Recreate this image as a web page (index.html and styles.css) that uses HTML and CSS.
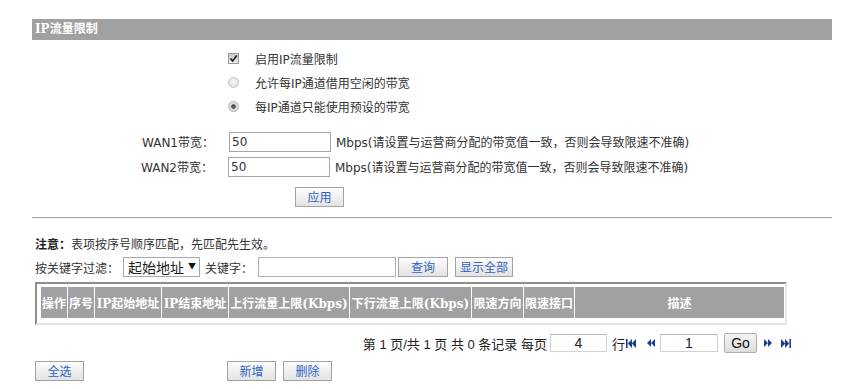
FILE: index.html
```html
<!DOCTYPE html>
<html lang="zh-CN">

<head>
    <meta charset="UTF-8">
    <title>IP流量限制</title>
    <link rel="stylesheet" href="styles.css">
</head>

<body>
    <div class="page">
        <div class="bar">IP流量限制</div>

        <!-- 限制方式 -->
        <div class="options">
            <div class="opt">
                <span class="cb"><svg width="9" height="9" viewBox="0 0 9 9"><path d="M1.5 4.5 L3.6 7 L7.8 1.6" fill="none" stroke="#1e1e1e" stroke-width="1.7"/></svg></span>启用IP流量限制
            </div>
            <div class="opt"><span class="rb"></span>允许每IP通道借用空闲的带宽</div>
            <div class="opt"><span class="rb on"></span>每IP通道只能使用预设的带宽</div>
        </div>

        <!-- 带宽 -->
        <div class="field first">
            <label class="name" for="wan1">WAN1带宽：</label>
            <input class="bw" id="wan1" type="text" value="50">
            <span class="hint">Mbps(请设置与运营商分配的带宽值一致，否则会导致限速不准确)</span>
        </div>
        <div class="field">
            <label class="name" for="wan2">WAN2带宽：</label>
            <input class="bw" id="wan2" type="text" value="50">
            <span class="hint">Mbps(请设置与运营商分配的带宽值一致，否则会导致限速不准确)</span>
        </div>

        <div class="apply"><button class="btn">应用</button></div>

        <div class="rule"></div>

        <div class="list">
            <p class="note"><b>注意：</b>表项按序号顺序匹配，先匹配先生效。</p>

            <div class="filter">
                按关键字过滤：
                <span class="sel">
                    <select>
                        <option>起始地址</option>
                        <option>结束地址</option>
                    </select>
                </span>
                <span class="kw-label">关键字：</span>
                <input class="kw" type="text">
                <button class="btn btn-query">查询</button>
                <button class="btn btn-all">显示全部</button>
            </div>

            <div class="grid-box">
                <table class="grid">
                    <colgroup>
                        <col style="width:26px">
                        <col style="width:26px">
                        <col style="width:66px">
                        <col style="width:66px">
                        <col style="width:120px">
                        <col style="width:121px">
                        <col style="width:51px">
                        <col style="width:50px">
                        <col style="width:209px">
                    </colgroup>
                    <tr>
                        <th>操作</th>
                        <th>序号</th>
                        <th>IP起始地址</th>
                        <th>IP结束地址</th>
                        <th>上行流量上限(Kbps)</th>
                        <th>下行流量上限(Kbps)</th>
                        <th>限速方向</th>
                        <th>限速接口</th>
                        <th>描述</th>
                    </tr>
                </table>
            </div>

            <!-- 分页 -->
            <div class="pager">
                <span class="info">第 1 页/共 1 页 共 0 条记录 每页</span>
                <input class="pg-input per" type="text" value="4">
                <span class="row-unit">行</span>
                <span class="ico first"><svg width="10" height="9" viewBox="0 0 10 9"><rect x="0" y="0" width="1.6" height="9" fill="#1b3e93"/><polygon points="6,0 1.8,4.5 6,9" fill="#1b3e93"/><polygon points="10,0 5.8,4.5 10,9" fill="#1b3e93"/></svg></span>
                <span class="ico prev"><svg width="8" height="8" viewBox="0 0 8 8"><polygon points="4,0 0,4 4,8" fill="#1b3e93"/><polygon points="8,0 4,4 8,8" fill="#1b3e93"/></svg></span>
                <input class="pg-input page-no" type="text" value="1">
                <button class="go">Go</button>
                <span class="ico next"><svg width="8" height="8" viewBox="0 0 8 8"><polygon points="0,0 4,4 0,8" fill="#1b3e93"/><polygon points="4,0 8,4 4,8" fill="#1b3e93"/></svg></span>
                <span class="ico last"><svg width="10" height="9" viewBox="0 0 10 9"><polygon points="0,0 4.2,4.5 0,9" fill="#1b3e93"/><polygon points="4,0 8.2,4.5 4,9" fill="#1b3e93"/><rect x="8.4" y="0" width="1.6" height="9" fill="#1b3e93"/></svg></span>
            </div>

            <div class="actions">
                <button class="btn">全选</button>
                <button class="btn btn-add">新增</button>
                <button class="btn btn-del">删除</button>
            </div>
        </div>
    </div>
</body>

</html>
```

FILE: styles.css
```css
body {
    margin: 0;
    font-family: "DejaVu Sans", "Noto Sans CJK SC", sans-serif;
    font-size: 12px;
    color: #333;
    background-color: #fff;
}

.page {
    width: 800px;
    margin-left: 32px;
    padding-top: 19px;
}

.bar {
    height: 21px;
    line-height: 21px;
    padding-left: 3px;
    background-color: #9fa1a3;
    color: #fff;
    font-family: "DejaVu Serif", "Noto Sans CJK SC", serif;
    font-weight: bold;
}

/* 复选框和单选框 */
.options {
    margin: 6px 0 0 196px;
}

.opt {
    height: 24px;
    display: flex;
    align-items: center;
}

.cb,
.rb {
    width: 11px;
    height: 11px;
    box-sizing: border-box;
    margin-right: 16px;
    flex-shrink: 0;
}

.cb {
    display: flex;
    align-items: center;
    justify-content: center;
    border: 1px solid #9c9c9c;
    background: linear-gradient(#c9c9c9, #e9e9e9);
}

.rb {
    border: 1px solid #c2c2c2;
    border-radius: 50%;
    background: radial-gradient(circle at 50% 40%, #f8f8f8, #d9d9d9);
}

.rb.on {
    border-color: #b0b0b0;
    background: radial-gradient(circle, #5a5a5a 0 2px, #d8d8d8 2.6px, #ececec);
}

/* 带宽 */
.field {
    height: 25px;
    display: flex;
    align-items: center;
}

.field.first {
    margin-top: 11px;
}

.name {
    width: 181px;
    margin-right: 15px;
    text-align: right;
    color: #333;
}

.bw {
    width: 102px;
    height: 20px;
    box-sizing: border-box;
    border: 1px solid #a7a7a7;
    padding: 0 2px;
    font-family: "DejaVu Sans", sans-serif;
    font-size: 12px;
    color: #333;
}

.hint {
    margin-left: 5px;
}

.btn {
    height: 20px;
    width: 49px;
    padding: 0;
    box-sizing: border-box;
    border: 1px solid #a3a3a3;
    background: linear-gradient(#fdfdfd, #e2e2e2);
    color: #2d62c6;
    font-family: "Noto Sans CJK SC", sans-serif;
    font-size: 12px;
    line-height: 18px;
}

.apply {
    margin: 8px 0 0 263px;
    height: 20px;
    display: flex;
}

.rule {
    margin-top: 10px;
    border-top: 1px solid #a9a9a9;
    border-bottom: 1px solid #f2f2f2;
}

/* 列表 */
.list {
    padding: 0 3px;
}

.note {
    margin: 15px 0 0;
    height: 20px;
    line-height: 20px;
    font-family: "Noto Sans CJK SC", sans-serif;
}

.note b {
    color: #222;
}

.filter {
    margin-top: 2px;
    height: 22px;
    display: flex;
    align-items: center;
    font-family: "Noto Sans CJK SC", sans-serif;
}

.sel {
    position: relative;
    margin-left: 4px;
    display: flex;
}

.sel select {
    appearance: none;
    width: 77px;
    height: 20px;
    box-sizing: border-box;
    border: 1px solid #a9a9a9;
    border-radius: 0;
    padding: 0 0 0 4px;
    background-color: #fff;
    color: #222;
    font-family: "Noto Sans CJK SC", sans-serif;
    font-size: 14px;
    line-height: 18px;
}

.sel::after {
    content: "▼";
    position: absolute;
    right: 4px;
    top: 5px;
    font-size: 8px;
    line-height: 8px;
    color: #111;
    pointer-events: none;
}

.kw-label {
    margin-left: 5px;
}

.kw {
    width: 138px;
    height: 20px;
    box-sizing: border-box;
    margin-left: 5px;
    border: 1px solid #b0b0b0;
}

.btn-query {
    width: 50px;
    margin-left: 2px;
}

.btn-all {
    width: 58px;
    margin-left: 7px;
}

.grid-box {
    margin-top: 4px;
    width: 752px;
    box-sizing: border-box;
    border: 2px solid;
    border-color: #8e8e8e #e6e6e6 #e6e6e6 #8e8e8e;
    padding: 3px 0 5px 3px;
}

.grid {
    table-layout: fixed;
    width: 745px;
    border-spacing: 1px 0;
}

.grid th {
    height: 31px;
    padding: 0;
    background-color: #9fa1a3;
    color: #fff;
    font-family: "DejaVu Serif", "Noto Sans CJK SC", serif;
    font-size: 12px;
    font-weight: bold;
    text-align: center;
    white-space: nowrap;
    overflow: hidden;
}

/* 分页 */
.pager {
    margin-top: 6px;
    width: 756px;
    height: 24px;
    display: flex;
    justify-content: flex-end;
    align-items: center;
    font-family: "Liberation Sans", "Noto Sans CJK SC", sans-serif;
    font-size: 13px;
    color: #222;
}

.pg-input {
    height: 18px;
    box-sizing: border-box;
    border: 1px solid #d2d2d2;
    border-top-color: #b8b8b8;
    text-align: center;
    font-family: "Liberation Sans", sans-serif;
    font-size: 14px;
    color: #222;
    padding: 0;
}

.per {
    width: 57px;
    margin-left: 3px;
}

.row-unit {
    margin-left: 5px;
}

.ico {
    display: flex;
}

.first {
    margin-left: 1px;
}

.prev {
    margin-left: 11px;
}

.page-no {
    width: 58px;
    margin-left: 5px;
}

.go {
    width: 33px;
    height: 20px;
    margin-left: 6px;
    padding: 0;
    border: 1px solid #adadad;
    border-radius: 2px;
    background: linear-gradient(#f4f4f4, #dedede);
    font-family: "Liberation Sans", sans-serif;
    font-size: 14px;
    color: #111;
}

.next {
    margin-left: 7px;
}

.last {
    margin-left: 9px;
}

.actions {
    margin-top: 6px;
    display: flex;
}

.btn-add {
    margin-left: 143px;
}

.btn-del {
    margin-left: 7px;
}
```
